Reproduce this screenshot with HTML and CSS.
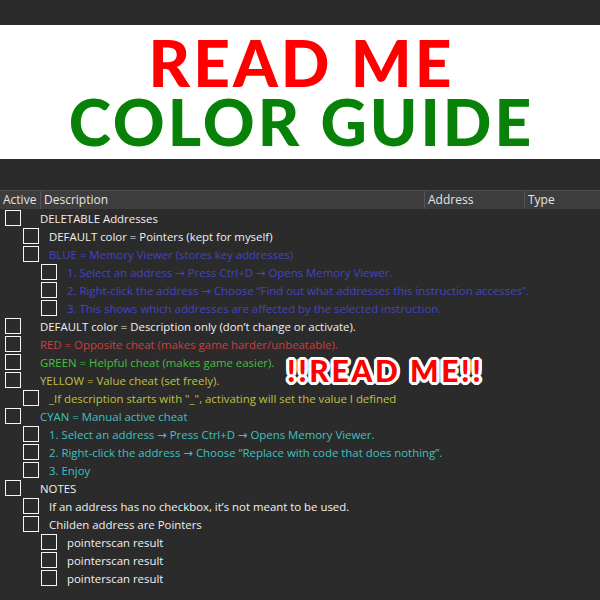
FILE: index.html
```html
<!DOCTYPE html>
<html>
<head>
<meta charset="utf-8">
<link rel="stylesheet" href="styles.css">
</head>
<body>
<div class="page">
  <div class="band-top"></div>
  <div class="banner">
    <div class="title red">READ ME</div>
    <div class="title green">COLOR GUIDE</div>
  </div>
  <div class="band-gap"></div>
  <div class="table">
    <div class="thead">
      <div class="th">Active</div>
      <div class="th">Description</div>
      <div class="th">Address</div>
      <div class="th">Type</div>
    </div>
    <div class="rows">
      <div class="row l0 c-white"><span class="cb"></span><span class="txt">DELETABLE Addresses</span></div>
      <div class="row l1 c-white"><span class="cb"></span><span class="txt">DEFAULT color = Pointers (kept for myself)</span></div>
      <div class="row l1 c-blue"><span class="cb"></span><span class="txt">BLUE = Memory Viewer (stores key addresses)</span></div>
      <div class="row l2 c-blue"><span class="cb"></span><span class="txt">1. Select an address → Press Ctrl+D → Opens Memory Viewer.</span></div>
      <div class="row l2 c-blue"><span class="cb"></span><span class="txt">2. Right-click the address → Choose “Find out what addresses this instruction accesses”.</span></div>
      <div class="row l2 c-blue"><span class="cb"></span><span class="txt">3. This shows which addresses are affected by the selected instruction.</span></div>
      <div class="row l0 c-white"><span class="cb"></span><span class="txt">DEFAULT color = Description only (don’t change or activate).</span></div>
      <div class="row l0 c-red"><span class="cb"></span><span class="txt">RED = Opposite cheat (makes game harder/unbeatable).</span></div>
      <div class="row l0 c-green"><span class="cb"></span><span class="txt">GREEN = Helpful cheat (makes game easier).</span></div>
      <div class="row l0 c-yellow"><span class="cb"></span><span class="txt">YELLOW = Value cheat (set freely).</span></div>
      <div class="row l1 c-yellow"><span class="cb"></span><span class="txt">_If description starts with "_", activating will set the value I defined</span></div>
      <div class="row l0 c-cyan"><span class="cb"></span><span class="txt">CYAN = Manual active cheat</span></div>
      <div class="row l1 c-cyan"><span class="cb"></span><span class="txt">1. Select an address → Press Ctrl+D → Opens Memory Viewer.</span></div>
      <div class="row l1 c-cyan"><span class="cb"></span><span class="txt">2. Right-click the address → Choose “Replace with code that does nothing”.</span></div>
      <div class="row l1 c-cyan"><span class="cb"></span><span class="txt">3. Enjoy</span></div>
      <div class="row l0 c-white"><span class="cb"></span><span class="txt">NOTES</span></div>
      <div class="row l1 c-white"><span class="cb"></span><span class="txt">If an address has no checkbox, it’s not meant to be used.</span></div>
      <div class="row l1 c-white"><span class="cb"></span><span class="txt">Childen address are Pointers</span></div>
      <div class="row l2 c-white"><span class="cb"></span><span class="txt">pointerscan result</span></div>
      <div class="row l2 c-white"><span class="cb"></span><span class="txt">pointerscan result</span></div>
      <div class="row l2 c-white"><span class="cb"></span><span class="txt">pointerscan result</span></div>
    </div>
    <div class="sticker">!!READ ME!!</div>
  </div>
</div>
</body>
</html>
```
FILE: styles.css
```css
* { box-sizing: border-box; }
html, body { margin: 0; padding: 0; }
body { background: #2b2b2b; }
.page { width: 600px; height: 600px; overflow: hidden; background: #2b2b2b; }
.band-top { height: 25px; }
.banner {
  background: #ffffff;
  height: 134px;
  padding-top: 8px;
  text-align: center;
}
.title {
  font-family: "Lato", sans-serif;
  font-weight: 900;
  font-size: 64px;
  line-height: 59px;
  letter-spacing: 3px;
  text-indent: 3px;
}
.title.red { color: #ff0000; }
.title.green { color: #078107; }
.band-gap { height: 31px; }

.table { position: relative; font-family: "Open Sans", "DejaVu Sans", sans-serif; font-size: 11.4px; }
.thead {
  display: grid;
  grid-template-columns: 40px 384px 100px 1fr;
  height: 19px;
  font-size: 12px;
  background: #3d3d3d;
  border-top: 1px solid #4d4d4d;
}
.th {
  color: #e4e4e4;
  padding-left: 3px;
  line-height: 17px;
  border-left: 1px solid #555;
}
.th:first-child { border-left: none; }
.row {
  display: flex;
  align-items: center;
  height: 18px;
  white-space: nowrap;
}
.cb {
  width: 16px;
  height: 16px;
  border: 1px solid #f6f6f6;
  flex: none;
}
.l0 .cb { margin-left: 5px; }
.l1 .cb { margin-left: 23px; }
.l2 .cb { margin-left: 41px; }
.l0 .txt { margin-left: 19px; }
.l1 .txt, .l2 .txt { margin-left: 10px; }
.c-white { color: #f0f0f0; }
.c-blue { color: #4343c8; }
.c-red { color: #c84040; }
.c-green { color: #40c040; }
.c-yellow { color: #c0c040; }
.c-cyan { color: #40c0c0; }

.sticker {
  position: absolute;
  left: 287px;
  top: 165px;
  font-family: "Lato", sans-serif;
  font-weight: 900;
  font-size: 30px;
  line-height: 30px;
  letter-spacing: 2.6px;
  color: #ff0000;
  text-shadow:
    3px 0 0 #fff, -3px 0 0 #fff, 0 3px 0 #fff, 0 -3px 0 #fff,
    2px 2px 0 #fff, -2px 2px 0 #fff, 2px -2px 0 #fff, -2px -2px 0 #fff,
    3px 1px 0 #fff, -3px 1px 0 #fff, 3px -1px 0 #fff, -3px -1px 0 #fff,
    1px 3px 0 #fff, -1px 3px 0 #fff, 1px -3px 0 #fff, -1px -3px 0 #fff;
}
```
